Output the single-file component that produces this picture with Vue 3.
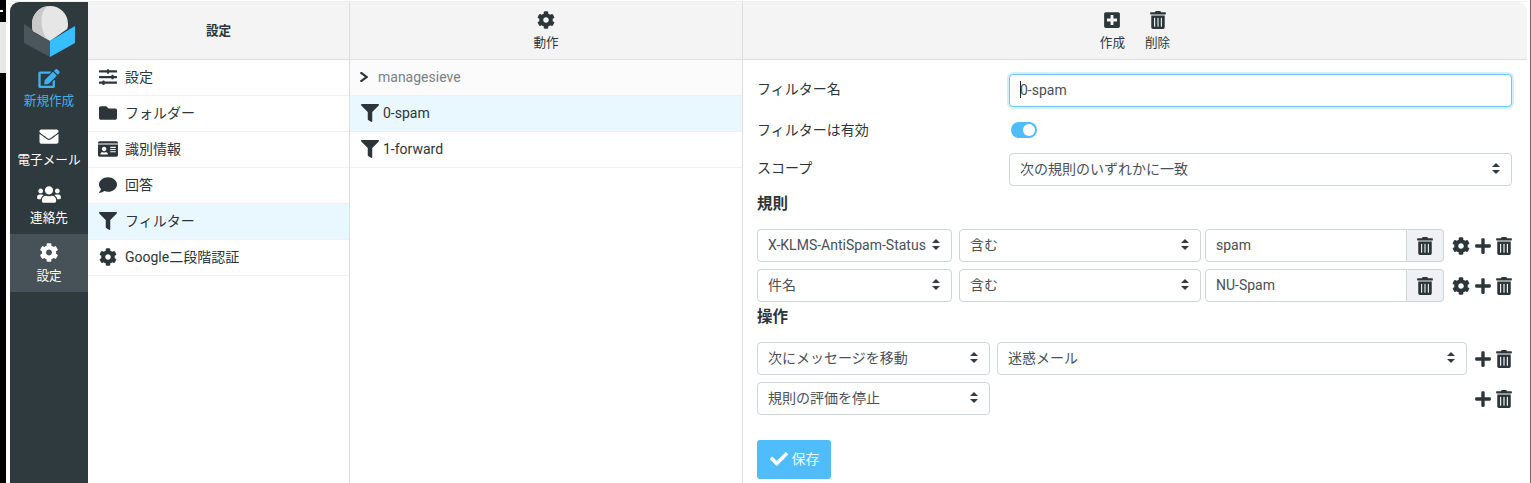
<script setup>
const icons = {
  cog: { v: '0 0 512 512', d: 'M487.4 315.7l-42.6-24.6c4.3-23.2 4.3-47 0-70.2l42.6-24.6c4.9-2.8 7.1-8.6 5.5-14-11.1-35.6-30-67.8-54.7-94.6-3.8-4.1-10-5.1-14.8-2.3L380.8 110c-17.9-15.4-38.5-27.3-60.8-35.1V25.8c0-5.6-3.9-10.5-9.4-11.7-36.7-8.2-74.3-7.8-109.2 0-5.5 1.2-9.4 6.1-9.4 11.7V75c-22.2 7.9-42.8 19.8-60.8 35.1L88.7 85.5c-4.9-2.8-11-1.9-14.8 2.3-24.7 26.7-43.6 58.9-54.7 94.6-1.7 5.4.6 11.2 5.5 14L67.3 221c-4.3 23.2-4.3 47 0 70.2l-42.6 24.6c-4.9 2.8-7.1 8.6-5.5 14 11.1 35.6 30 67.8 54.7 94.6 3.8 4.1 10 5.1 14.8 2.3l42.6-24.6c17.9 15.4 38.5 27.3 60.8 35.1v49.2c0 5.6 3.9 10.5 9.4 11.7 36.7 8.2 74.3 7.8 109.2 0 5.5-1.2 9.4-6.1 9.4-11.7v-49.2c22.2-7.9 42.8-19.8 60.8-35.1l42.6 24.6c4.9 2.8 11 1.9 14.8-2.3 24.7-26.7 43.6-58.9 54.7-94.6 1.5-5.5-.7-11.3-5.6-14.1zM256 336c-44.1 0-80-35.9-80-80s35.9-80 80-80 80 35.9 80 80-35.9 80-80 80z' },
  filter: { v: '0 0 512 512', d: 'M487.976 0H24.028C2.71 0-8.047 25.866 7.058 40.971L192 225.941V432c0 7.831 3.821 15.17 10.237 19.662l80 55.98C298.02 518.69 320 507.493 320 487.98V225.941l184.947-184.97C520.021 25.896 509.338 0 487.976 0z' },
  trash: { v: '0 0 448 512', d: 'M32 464a48 48 0 0 0 48 48h288a48 48 0 0 0 48-48V128H32zm272-256a16 16 0 0 1 32 0v224a16 16 0 0 1-32 0zm-96 0a16 16 0 0 1 32 0v224a16 16 0 0 1-32 0zm-96 0a16 16 0 0 1 32 0v224a16 16 0 0 1-32 0zM432 32H312l-9.4-18.7A24 24 0 0 0 281.1 0H166.8a23.72 23.72 0 0 0-21.4 13.3L136 32H16A16 16 0 0 0 0 48v32a16 16 0 0 0 16 16h416a16 16 0 0 0 16-16V48a16 16 0 0 0-16-16z' },
  plus: { v: '0 0 448 512', d: 'M416 208H272V64c0-17.67-14.33-32-32-32h-32c-17.67 0-32 14.33-32 32v144H32c-17.67 0-32 14.33-32 32v32c0 17.67 14.33 32 32 32h144v144c0 17.67 14.33 32 32 32h32c17.67 0 32-14.33 32-32V304h144c17.67 0 32-14.33 32-32v-32c0-17.67-14.33-32-32-32z' },
  plusSquare: { v: '0 0 448 512', d: 'M400 32H48C21.5 32 0 53.5 0 80v352c0 26.5 21.5 48 48 48h352c26.5 0 48-21.5 48-48V80c0-26.5-21.5-48-48-48zm-32 252c0 6.6-5.4 12-12 12h-92v92c0 6.6-5.4 12-12 12h-56c-6.6 0-12-5.4-12-12v-92H92c-6.6 0-12-5.4-12-12v-56c0-6.6 5.4-12 12-12h92v-92c0-6.6 5.4-12 12-12h56c6.6 0 12 5.4 12 12v92h92c6.6 0 12 5.4 12 12v56z' },
  check: { v: '0 0 512 512', d: 'M173.898 439.404l-166.4-166.4c-9.997-9.997-9.997-26.206 0-36.204l36.203-36.204c9.997-9.998 26.207-9.998 36.204 0L192 312.69 432.095 72.596c9.997-9.997 26.207-9.997 36.204 0l36.203 36.204c9.997 9.997 9.997 26.206 0 36.204l-294.4 294.401c-9.998 9.997-26.207 9.997-36.204-.001z' },
  envelope: { v: '0 0 512 512', d: 'M502.3 190.8c3.9-3.1 9.7-.2 9.7 4.7V400c0 26.5-21.5 48-48 48H48c-26.5 0-48-21.5-48-48V195.6c0-5 5.7-7.8 9.7-4.7 22.4 17.4 52.1 39.5 154.1 113.6 21.1 15.4 56.7 47.8 92.2 47.6 35.7.3 72-32.8 92.3-47.6 102-74.1 131.6-96.3 154-113.7zM256 320c23.2.4 56.6-29.2 73.4-41.4 132.7-96.3 142.8-104.7 173.4-128.7 5.8-4.5 9.2-11.5 9.2-18.9v-19c0-26.5-21.5-48-48-48H48C21.5 64 0 85.5 0 112v19c0 7.4 3.4 14.3 9.2 18.9 30.6 23.9 40.7 32.4 173.4 128.7 16.8 12.2 50.2 41.8 73.4 41.4z' },
  users: { v: '0 0 640 512', d: 'M96 224c35.3 0 64-28.7 64-64s-28.7-64-64-64-64 28.7-64 64 28.7 64 64 64zm448 0c35.3 0 64-28.7 64-64s-28.7-64-64-64-64 28.7-64 64 28.7 64 64 64zm32 32h-64c-17.6 0-33.5 7.1-45.1 18.6 40.3 22.1 68.9 62 75.1 109.4h66c17.7 0 32-14.3 32-32v-32c0-35.3-28.7-64-64-64zm-256 0c61.9 0 112-50.1 112-112S381.9 32 320 32 208 82.1 208 144s50.1 112 112 112zm76.8 32h-8.3c-20.8 10-43.9 16-68.5 16s-47.6-6-68.5-16h-8.3C179.6 288 128 339.6 128 403.2V432c0 26.5 21.5 48 48 48h288c26.5 0 48-21.5 48-48v-28.8c0-63.6-51.6-115.2-115.2-115.2zm-223.7-13.4C161.5 263.1 145.6 256 128 256H64c-35.3 0-64 28.7-64 64v32c0 17.7 14.3 32 32 32h65.9c6.3-47.4 34.9-87.3 75.2-109.4z' },
  edit: { v: '0 0 576 512', d: 'M402.6 83.2l90.2 90.2c3.8 3.8 3.8 10 0 13.8L274.4 405.6l-92.8 10.3c-12.4 1.4-22.9-9.1-21.5-21.5l10.3-92.8L388.8 83.2c3.8-3.8 10-3.8 13.8 0zm162-22.9l-48.8-48.8c-15.2-15.2-39.9-15.2-55.2 0l-35.4 35.4c-3.8 3.8-3.8 10 0 13.8l90.2 90.2c3.8 3.8 10 3.8 13.8 0l35.4-35.4c15.2-15.3 15.2-40 0-55.2zM384 346.2V448H64V128h229.8c3.2 0 6.2-1.3 8.5-3.5l40-40c7.6-7.6 2.2-20.5-8.5-20.5H48C21.5 64 0 85.5 0 112v352c0 26.5 21.5 48 48 48h352c26.5 0 48-21.5 48-48V306.2c0-10.7-12.9-16-20.5-8.5l-40 40c-2.2 2.3-3.5 5.3-3.5 8.5z' },
  folder: { v: '0 0 512 512', d: 'M464 128H272l-64-64H48C21.5 64 0 85.5 0 112v288c0 26.5 21.5 48 48 48h416c26.5 0 48-21.5 48-48V176c0-26.5-21.5-48-48-48z' },
  sliders: { v: '0 0 512 512', d: 'M496 384H160v-16c0-8.8-7.2-16-16-16h-32c-8.8 0-16 7.2-16 16v16H16c-8.8 0-16 7.2-16 16v32c0 8.8 7.2 16 16 16h80v16c0 8.8 7.2 16 16 16h32c8.8 0 16-7.2 16-16v-16h336c8.8 0 16-7.2 16-16v-32c0-8.8-7.2-16-16-16zm0-160h-80v-16c0-8.8-7.2-16-16-16h-32c-8.8 0-16 7.2-16 16v16H16c-8.8 0-16 7.2-16 16v32c0 8.8 7.2 16 16 16h336v16c0 8.8 7.2 16 16 16h32c8.8 0 16-7.2 16-16v-16h80c8.8 0 16-7.2 16-16v-32c0-8.8-7.2-16-16-16zm0-160H288V48c0-8.8-7.2-16-16-16h-32c-8.8 0-16 7.2-16 16v16H16C7.2 64 0 71.2 0 80v32c0 8.8 7.2 16 16 16h208v16c0 8.8 7.2 16 16 16h32c8.8 0 16-7.2 16-16v-16h208c8.8 0 16-7.2 16-16V80c0-8.8-7.2-16-16-16z' },
  comment: { v: '0 0 512 512', d: 'M256 32C114.6 32 0 125.1 0 240c0 49.6 21.4 95 57 130.7C44.5 421.1 2.7 466 2.2 466.5c-2.2 2.3-2.8 5.7-1.5 8.7S4.8 480 8 480c66.3 0 116-31.8 140.6-51.4 32.7 12.3 69 19.4 107.4 19.4 141.4 0 256-93.1 256-208S397.4 32 256 32z' },
  idCard: { v: '0 0 576 512', d: 'M528 32H48C21.5 32 0 53.5 0 80v16h576V80c0-26.5-21.5-48-48-48zM0 432c0 26.5 21.5 48 48 48h480c26.5 0 48-21.5 48-48V128H0v304zm352-232c0-4.4 3.6-8 8-8h144c4.4 0 8 3.6 8 8v16c0 4.4-3.6 8-8 8H360c-4.4 0-8-3.6-8-8v-16zm0 64c0-4.4 3.6-8 8-8h144c4.4 0 8 3.6 8 8v16c0 4.4-3.6 8-8 8H360c-4.4 0-8-3.6-8-8v-16zm0 64c0-4.4 3.6-8 8-8h144c4.4 0 8 3.6 8 8v16c0 4.4-3.6 8-8 8H360c-4.4 0-8-3.6-8-8v-16zM176 192c35.3 0 64 28.7 64 64s-28.7 64-64 64-64-28.7-64-64 28.7-64 64-64zM67.1 396.2C75.5 370.5 99.6 352 128 352h8.2c12.3 5.1 25.7 8 39.8 8s27.6-2.9 39.8-8h8.2c28.4 0 52.5 18.5 60.9 44.2 3.2 9.9-5.2 19.8-15.6 19.8H82.7c-10.4 0-18.8-10-15.6-19.8z' },
  chevron: { v: '30 40 260 432', d: 'M285.476 272.971L91.132 467.314c-9.373 9.373-24.569 9.373-33.941 0l-22.667-22.667c-9.357-9.357-9.375-24.522-.04-33.901L188.505 256 34.484 101.255c-9.335-9.379-9.317-24.544.04-33.901l22.667-22.667c9.373-9.373 24.569-9.373 33.941 0L285.475 239.03c9.373 9.372 9.373 24.568.001 33.941z' }
}
const nav = [
  { icon: 'edit', label: '新規作成', cls: 'compose' },
  { icon: 'envelope', label: '電子メール', cls: '' },
  { icon: 'users', label: '連絡先', cls: '' },
  { icon: 'cog', label: '設定', cls: 'active' }
]
const sections = [
  { icon: 'sliders', label: '設定' },
  { icon: 'folder', label: 'フォルダー' },
  { icon: 'idCard', label: '識別情報' },
  { icon: 'comment', label: '回答' },
  { icon: 'filter', label: 'フィルター', selected: true },
  { icon: 'cog', label: 'Google二段階認証' }
]
const filters = [
  { label: '0-spam', selected: true },
  { label: '1-forward' }
]
const rules = [
  { header: 'X-KLMS-AntiSpam-Status', op: '含む', value: 'spam' },
  { header: '件名', op: '含む', value: 'NU-Spam' }
]
</script>

<template>
  <div class="page">
    <div class="strip">
      <div class="strip-dark"><i></i></div>
      <div class="strip-light"></div>
      <div class="strip-black"></div>
    </div>

    <div class="frame">
      <nav class="sidebar">
        <svg class="logo" viewBox="0 0 78 56" width="78" height="56">
          <path d="M14 22 L14 41 L40 55 L40 39 Z" fill="#4a565b" />
          <path d="M40 39 L65 24 L65 41 L40 55 Z" fill="#37beff" />
          <path d="M40 4 a18 18 0 0 1 18 18 c0 2 -.3 3.5 -.8 5 L40 39 L23 29 C22.300 27 22 24.500 22 22 a18 18 0 0 1 18 -18 Z" fill="#e6e6e6" />
          <path d="M38 4.100 a18 18 0 0 0 -16 17.900 c0 2.500 .3 5 1 7 l13 7 C33 31 31.500 25 31.500 19 C31.500 12 33.500 7 38 4.100 Z" fill="#c9c9c9" />
        </svg>
        <a v-for="item in nav" :key="item.label" class="nav-item" :class="item.cls">
          <svg class="nav-icon" :viewBox="icons[item.icon].v"><path :d="icons[item.icon].d" /></svg>
          <span>{{ item.label }}</span>
        </a>
      </nav>

      <section class="col col-sections">
        <header class="head"><h2>設定</h2></header>
        <ul class="list">
          <li v-for="s in sections" :key="s.label" :class="{ selected: s.selected }">
            <svg class="row-icon" :viewBox="icons[s.icon].v"><path :d="icons[s.icon].d" /></svg>
            <span>{{ s.label }}</span>
          </li>
        </ul>
      </section>

      <section class="col col-filters">
        <header class="head">
          <a class="tool">
            <svg class="tool-icon" :viewBox="icons.cog.v"><path :d="icons.cog.d" /></svg>
            <span>動作</span>
          </a>
        </header>
        <ul class="list filters">
          <li class="set">
            <svg class="chev" :viewBox="icons.chevron.v" preserveAspectRatio="none"><path :d="icons.chevron.d" /></svg>
            <span>managesieve</span>
          </li>
          <li v-for="f in filters" :key="f.label" :class="{ selected: f.selected }">
            <svg class="filter-icon" :viewBox="icons.filter.v"><path :d="icons.filter.d" /></svg>
            <span>{{ f.label }}</span>
          </li>
        </ul>
      </section>

      <section class="col col-form">
        <header class="head">
          <a class="tool">
            <svg class="tool-icon" :viewBox="icons.plusSquare.v"><path :d="icons.plusSquare.d" /></svg>
            <span>作成</span>
          </a>
          <a class="tool">
            <svg class="tool-icon" :viewBox="icons.trash.v"><path :d="icons.trash.d" /></svg>
            <span>削除</span>
          </a>
        </header>

        <form class="form" @submit.prevent>
          <div class="field lift">
            <label>フィルター名</label>
            <div class="name-wrap">
              <input class="control name" value="0-spam" readonly />
              <i class="caret"></i>
            </div>
          </div>
          <div class="field toggle-row">
            <label>フィルターは有効</label>
            <span class="toggle"><i></i></span>
          </div>
          <div class="field lift">
            <label>スコープ</label>
            <div class="control select grow">
              <span>次の規則のいずれかに一致</span><b class="arrows"></b>
            </div>
          </div>

          <h3>規則</h3>
          <div class="rows">
            <div v-for="r in rules" :key="r.value" class="line">
              <div class="control select w-header"><span>{{ r.header }}</span><b class="arrows"></b></div>
              <div class="control select w-op"><span>{{ r.op }}</span><b class="arrows"></b></div>
              <div class="group">
                <input class="control value" :value="r.value" readonly />
                <span class="addon">
                  <svg class="act" :viewBox="icons.trash.v"><path :d="icons.trash.d" /></svg>
                </span>
              </div>
              <div class="actions">
                <svg class="act wide" :viewBox="icons.cog.v"><path :d="icons.cog.d" /></svg>
                <svg class="act" :viewBox="icons.plus.v"><path :d="icons.plus.d" /></svg>
                <svg class="act" :viewBox="icons.trash.v"><path :d="icons.trash.d" /></svg>
              </div>
            </div>
          </div>

          <h3 class="second">操作</h3>
          <div class="rows">
            <div class="line">
              <div class="control select w-action"><span>次にメッセージを移動</span><b class="arrows"></b></div>
              <div class="control select w-folder"><span>迷惑メール</span><b class="arrows"></b></div>
              <div class="actions">
                <svg class="act" :viewBox="icons.plus.v"><path :d="icons.plus.d" /></svg>
                <svg class="act" :viewBox="icons.trash.v"><path :d="icons.trash.d" /></svg>
              </div>
            </div>
            <div class="line">
              <div class="control select w-action"><span>規則の評価を停止</span><b class="arrows"></b></div>
              <div class="actions">
                <svg class="act" :viewBox="icons.plus.v"><path :d="icons.plus.d" /></svg>
                <svg class="act" :viewBox="icons.trash.v"><path :d="icons.trash.d" /></svg>
              </div>
            </div>
          </div>

          <button class="save" type="submit">
            <svg :viewBox="icons.check.v"><path :d="icons.check.d" /></svg>
            <span>保存</span>
          </button>
        </form>
      </section>
    </div>
    <div class="edge"></div>
  </div>
</template>

<style scoped>
.page {
  display: flex;
  width: 1531px;
  height: 483px;
  overflow: hidden;
  background: #fff;
  font-family: Roboto, "Noto Sans CJK JP", sans-serif;
  font-size: 14px;
  line-height: 20px;
  color: #2c363a;
}
.strip { width: 6px; display: flex; flex-direction: column; flex: none; }
.strip-dark { height: 22px; background: #000; padding-top: 10px; box-sizing: border-box; }
.strip-dark i { display: block; width: 3px; height: 2px; background: #fff; }
.strip-light { height: 51px; background: #e8e8e8; }
.strip-black { flex: 1; background: #000; }
.frame {
  flex: 1;
  display: flex;
  margin: 1px 3px 0 4px;
  border-top: 1px solid #efefef;
  min-width: 0;
  height: 482px;
  box-sizing: border-box;
}
.edge { width: 1px; flex: none; background: #6d6d6d; }

.sidebar {
  width: 78px;
  flex: none;
  display: flex;
  flex-direction: column;
  background: #2f3a3f;
  border-radius: 9px 0 0 0;
  color: #fff;
}
.logo { display: block; margin-bottom: 2px; flex: none; }
.nav-item {
  height: 58px;
  flex: none;
  display: flex;
  flex-direction: column;
  align-items: center;
  font-size: 12.6px;
  line-height: 16px;
}
.nav-icon { height: 19px; width: 26px; margin: 9px 0 6px; fill: currentColor; flex: none; }
.nav-item.compose .nav-icon { margin-bottom: 5px; }
.nav-item.compose { color: #3fb1f0; }
.nav-item.active { background: #465257; }

.col { display: flex; flex-direction: column; flex: none; }
.col-sections { width: 262px; border-right: 1px solid #ddd; box-sizing: border-box; }
.col-filters { width: 393px; border-right: 1px solid #ddd; box-sizing: border-box; }
.col-form { flex: 1; min-width: 0; }

.head {
  height: 58px;
  box-sizing: border-box;
  flex: none;
  background: #f4f4f4;
  border-bottom: 1px solid #ddd;
  display: flex;
  align-items: center;
  justify-content: center;
}
.col-form .head { border-radius: 0 9px 0 0; gap: 20px; }
.head h2 { margin: 0; font-size: 12.6px; line-height: 16px; font-weight: 700; }
.tool {
  display: flex;
  flex-direction: column;
  align-items: center;
  font-size: 12.6px;
  line-height: 16px;
  padding-top: 1px;
}
.tool-icon { width: 18px; height: 18px; fill: #2c363a; margin-bottom: 6px; flex: none; }

.list { list-style: none; margin: 0; padding: 0; }
.list li {
  height: 36px;
  box-sizing: border-box;
  display: flex;
  align-items: center;
  border-bottom: 1px solid #f0f0f0;
  padding-left: 10px;
  padding-bottom: 1px;
}
.list li.selected { background: #e9f7fe; }
.row-icon { width: 20px; height: 18px; fill: #2c363a; margin-right: 7px; flex: none; }
.filters li { padding-left: 10px; }
.filter-icon { width: 18px; height: 18px; fill: #2c363a; margin: 0 4px 0 1px; flex: none; }
.chev { width: 8px; height: 10px; fill: #2c363a; margin-right: 10px; flex: none; }
.list li.set { background: #fbfbfb; color: #7c8083; }

.form { padding: 14px 15px 0 14px; display: flex; flex-direction: column; }
.field { display: flex; align-items: center; height: 33px; margin-bottom: 5px; }
.field label { width: 252px; flex: none; }
.lift label { padding-bottom: 3px; }
.toggle-row { height: 36px; }
.name-wrap { flex: 1; position: relative; display: flex; }
.control {
  height: 33px;
  box-sizing: border-box;
  border: 1px solid #ced4da;
  border-radius: 4px;
  background: #fff;
  font: inherit;
  color: #495057;
  padding: 0 10px 2px;
  outline: none;
  min-width: 0;
}
.name {
  width: 100%;
  border-color: #6fc7ee;
  box-shadow: 0 0 0 2px #d3effc;
}
.caret {
  position: absolute;
  left: 11px;
  top: 7px;
  width: 1px;
  height: 17px;
  background: #222;
}
.toggle {
  width: 26px;
  height: 16px;
  margin-left: 2px;
  border-radius: 8px;
  background: #4fbdfb;
  display: flex;
  justify-content: flex-end;
  align-items: center;
  padding-right: 2px;
  box-sizing: border-box;
}
.toggle i { width: 12px; height: 12px; border-radius: 50%; background: #fff; }

.select { display: flex; align-items: center; justify-content: space-between; white-space: nowrap; }
.grow { flex: 1; }
.arrows {
  width: 8px;
  height: 11px;
  flex: none;
  margin-right: 1px;
  display: flex;
  flex-direction: column;
  justify-content: space-between;
}
.arrows::before, .arrows::after {
  content: "";
  border-left: 4px solid transparent;
  border-right: 4px solid transparent;
}
.arrows::before { border-bottom: 4px solid #343a40; }
.arrows::after { border-top: 4px solid #343a40; }

h3 {
  margin: 2px 0 0;
  height: 23px;
  line-height: 23px;
  font-size: 15.5px;
  font-weight: 700;
}
h3.second { margin-top: 4px; }
.rows { display: flex; flex-direction: column; gap: 7px; margin-top: 13px; }
.line { display: flex; align-items: center; height: 33px; }
.w-header { width: 195px; margin-right: 7px; }
.w-op { width: 242px; margin-right: 4px; }
.w-action { width: 233px; margin-right: 7px; }
.w-folder { width: 470px; }
.group { display: flex; width: 239px; }
.value { flex: 1; border-radius: 4px 0 0 4px; }
.addon {
  width: 37px;
  height: 33px;
  box-sizing: border-box;
  border: 1px solid #ced4da;
  border-left: 0;
  border-radius: 0 4px 4px 0;
  background: #eff1f4;
  display: flex;
  align-items: center;
  justify-content: center;
}
.actions { margin-left: auto; display: flex; align-items: center; gap: 5px; }
.act { width: 16px; height: 18px; fill: #2c363a; display: block; flex: none; }
.act.wide { width: 18px; }

.save {
  width: 74px;
  height: 39px;
  margin-top: 25px;
  border: 0;
  border-radius: 3px;
  background: #4fbdfb;
  color: #eef9ff;
  font: inherit;
  padding: 0 0 2px 1px;
  display: flex;
  align-items: center;
  justify-content: center;
  gap: 4px;
}
.save svg { width: 18px; height: 18px; fill: #fff; flex: none; }
</style>
